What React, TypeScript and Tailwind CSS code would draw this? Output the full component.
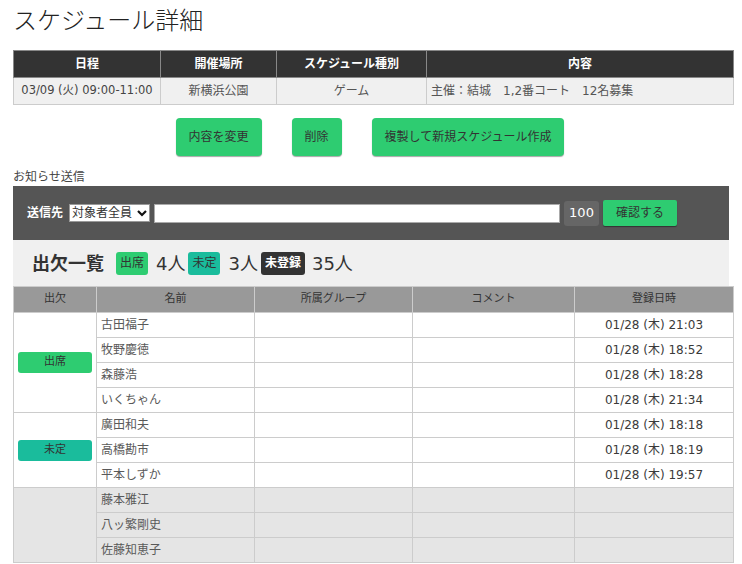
import React from "react";

interface Member {
  name: string;
  date?: string;
}

const attend: Member[] = [
  { name: "古田福子", date: "01/28 (木) 21:03" },
  { name: "牧野慶徳", date: "01/28 (木) 18:52" },
  { name: "森藤浩", date: "01/28 (木) 18:28" },
  { name: "いくちゃん", date: "01/28 (木) 21:34" },
];

const pending: Member[] = [
  { name: "廣田和夫", date: "01/28 (木) 18:18" },
  { name: "高橋勘市", date: "01/28 (木) 18:19" },
  { name: "平本しずか", date: "01/28 (木) 19:57" },
];

const unregistered: Member[] = [
  { name: "藤本雅江" },
  { name: "八ッ繁剛史" },
  { name: "佐藤知恵子" },
];

const cell = "border border-[#cccccc] h-[25px] p-0 px-[4px] align-middle";

const Group = ({
  members,
  label,
  badge,
  bg,
}: {
  members: Member[];
  label?: string;
  badge?: string;
  bg: string;
}) => (
  <>
    {members.map((m, i) => (
      <tr key={m.name} className={bg}>
        {i === 0 && (
          <td rowSpan={members.length} className={`${cell} border-t-[#bbbbbb]`}>
            {label && (
              <div className={`${badge} h-[21px] rounded-[3px] flex items-center justify-center text-[11px] text-[#333]`}>
                {label}
              </div>
            )}
          </td>
        )}
        <td className={`${cell} text-left text-[#595959]`}>{m.name}</td>
        <td className={cell}></td>
        <td className={cell}></td>
        <td className={`${cell} text-center text-[#3a3a3a]`}>{m.date}</td>
      </tr>
    ))}
  </>
);

const GreenButton = ({ label }: { label: string }) => (
  <button className="h-[38px] px-[13px] mx-[15px] rounded-[4px] bg-[#2ecc71] text-[12px] text-[#333] shadow-[0_1px_1px_rgba(0,0,0,0.35)]">
    {label}
  </button>
);

export default function App() {
  return (
    <div className="font-[family-name:DejaVu_Sans,Noto_Sans_CJK_JP,sans-serif] bg-white text-[#333] text-[12px] px-[13px] w-[742px] h-[564px] overflow-hidden">
      <h1 className="pt-[5px] h-[50px] text-[24px] leading-[32px] font-light text-[#222]">
        スケジュール詳細
      </h1>

      <table className="w-[720px] border-collapse table-fixed text-[12px]">
        <colgroup>
          <col className="w-[147px]" />
          <col className="w-[116px]" />
          <col className="w-[150px]" />
          <col className="w-[307px]" />
        </colgroup>
        <thead>
          <tr className="bg-[#333] text-white font-bold h-[27px]">
            {["日程", "開催場所", "スケジュール種別", "内容"].map((h) => (
              <th key={h} className="border border-[#888] p-0 text-center">
                {h}
              </th>
            ))}
          </tr>
        </thead>
        <tbody>
          <tr className="bg-[#f0f0f0] h-[27px] text-[#555]">
            <td className="border border-[#cccccc] text-center text-[11.5px] text-[#444]">03/09 (火) 09:00-11:00</td>
            <td className="border border-[#cccccc] text-center">新横浜公園</td>
            <td className="border border-[#cccccc] text-center">ゲーム</td>
            <td className="border border-[#cccccc] px-[4px]">主催：結城　1,2番コート　12名募集</td>
          </tr>
        </tbody>
      </table>

      <div className="flex justify-center mt-[13px] w-[720px] pr-[6px]">
        <GreenButton label="内容を変更" />
        <GreenButton label="削除" />
        <GreenButton label="複製して新規スケジュール作成" />
      </div>

      <div className="mt-[13px] h-[17px] leading-[17px] text-[12px] text-[#444]">お知らせ送信</div>

      <div className="bg-[#555] h-[54px] flex items-center pl-[14px] gap-[4px]">
        <span className="text-white font-bold text-[12px] mr-[2px]">送信先</span>
        <div className="bg-white h-[18px] w-[81px] flex items-center justify-between px-[2px] border border-[#999]">
          <select className="appearance-none bg-transparent text-[12px] text-[#333] outline-none leading-[16px]">
            <option>対象者全員</option>
          </select>
          <svg width="10" height="8" viewBox="0 0 10 8">
            <path d="M1 2 L5 6 L9 2" stroke="#111" strokeWidth="2.2" fill="none" />
          </svg>
        </div>
        <input className="bg-white h-[19px] w-[406px] border border-[#aaa] outline-none" />
        <div className="bg-[#666] text-white text-[13px] h-[25px] w-[35px] rounded-[3px] flex items-center justify-center">
          100
        </div>
        <button className="bg-[#2ecc71] text-[#333] text-[12px] h-[26px] w-[74px] rounded-[2px] shadow-[0_1px_1px_rgba(0,0,0,0.4)]">
          確認する
        </button>
      </div>

      <div className="bg-[#f0f0f0] h-[46px] flex items-center pl-[19px]">
        <span className="text-[18px] font-bold text-[#333] mr-[12px]">出欠一覧</span>
        <span className="bg-[#2ecc71] text-[#333] text-[12px] h-[23px] px-[4px] rounded-[3px] flex items-center">出席</span>
        <span className="text-[18px] text-[#333] ml-[8px] mr-[3px]">4人</span>
        <span className="bg-[#1abc9c] text-[#333] text-[12px] h-[23px] px-[4px] rounded-[3px] flex items-center">未定</span>
        <span className="text-[18px] text-[#333] ml-[8px] mr-[3px]">3人</span>
        <span className="bg-[#333] text-white font-bold text-[12px] h-[23px] px-[4px] rounded-[3px] flex items-center">未登録</span>
        <span className="text-[18px] text-[#333] ml-[7px]">35人</span>
      </div>

      <table className="w-[720px] border-collapse table-fixed text-[12px]">
        <colgroup>
          <col className="w-[83px]" />
          <col className="w-[158px]" />
          <col className="w-[158px]" />
          <col className="w-[162px]" />
          <col className="w-[159px]" />
        </colgroup>
        <thead>
          <tr className="bg-[#999] h-[26px] text-[#333]">
            {["出欠", "名前", "所属グループ", "コメント", "登録日時"].map((h) => (
              <th key={h} className="border border-[#cccccc] p-0 font-normal text-[11px] text-center">
                {h}
              </th>
            ))}
          </tr>
        </thead>
        <tbody>
          <Group members={attend} label="出席" badge="bg-[#2ecc71]" bg="bg-white" />
          <Group members={pending} label="未定" badge="bg-[#1abc9c]" bg="bg-white" />
          <Group members={unregistered} bg="bg-[#e5e5e5]" />
        </tbody>
      </table>
    </div>
  );
}
